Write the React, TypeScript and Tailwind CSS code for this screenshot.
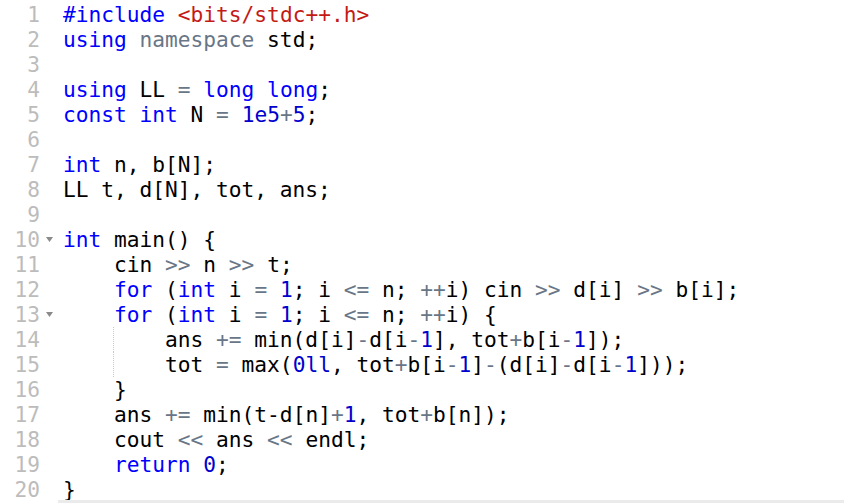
import type { ReactNode } from 'react';

type Tok = [string, string?];

const K = 'text-[#0000ff]';
const S = 'text-[#c41a16]';
const O = 'text-[#687687]';
const N = 'text-[#0000cd]';

const lines: Tok[][] = [
    [['#include', K], [' '], ['<bits/stdc++.h>', S]],
    [['using', K], [' '], ['namespace', O], [' std;']],
    [],
    [['using', K], [' LL '], ['=', O], [' '], ['long long', K], [';']],
    [['const', K], [' '], ['int', K], [' N '], ['=', O], [' '], ['1e5', N], ['+', O], ['5', N], [';']],
    [],
    [['int', K], [' n, b[N];']],
    [['LL t, d[N], tot, ans;']],
    [],
    [['int', K], [' main() {']],
    [['    cin '], ['>>', O], [' n '], ['>>', O], [' t;']],
    [
        ['    '], ['for', K], [' ('], ['int', K], [' i '], ['=', O], [' '], ['1', N], ['; i '], ['<=', O],
        [' n; '], ['++', O], ['i) cin '], ['>>', O], [' d[i] '], ['>>', O], [' b[i];'],
    ],
    [
        ['    '], ['for', K], [' ('], ['int', K], [' i '], ['=', O], [' '], ['1', N], ['; i '], ['<=', O],
        [' n; '], ['++', O], ['i) {'],
    ],
    [
        ['        ans '], ['+=', O], [' min(d[i]'], ['-', O], ['d[i'], ['-', O], ['1', N], ['], tot'],
        ['+', O], ['b[i'], ['-', O], ['1', N], [']);'],
    ],
    [
        ['        tot '], ['=', O], [' max('], ['0ll', N], [', tot'], ['+', O], ['b[i'], ['-', O], ['1', N],
        [']'], ['-', O], ['(d[i]'], ['-', O], ['d[i'], ['-', O], ['1', N], [']));'],
    ],
    [['    }']],
    [
        ['    ans '], ['+=', O], [' min(t-d[n]'], ['+', O], ['1', N], [', tot'], ['+', O], ['b[n]);'],
    ],
    [['    cout '], ['<<', O], [' ans '], ['<<', O], [' endl;']],
    [['    '], ['return', K], [' '], ['0', N], [';']],
    [['}']],
];

const folds = new Set([10, 13]);

function Line({ toks, n }: { toks: Tok[]; n: number }): ReactNode {
    return (
        <div className="relative h-[25px] leading-[25px] whitespace-pre">
            {(n === 14 || n === 15) && (
                <span className="absolute left-[50px] top-0 h-[25px] border-l border-dotted border-[#c8c8c8]" />
            )}
            {toks.length === 0 ? ' ' : toks.map(([t, c], i) => (
                <span key={i} className={c ?? 'text-black'}>
                    {t}
                </span>
            ))}
        </div>
    );
}

export default function App() {
    return (
        <div
            className="relative h-[503px] w-[844px] overflow-hidden bg-white pt-[2px] text-[21.2px]"
            style={{ fontFamily: '"DejaVu Sans Mono", "Liberation Mono", monospace' }}
        >
            <div className="flex">
                <div className="w-[63px] shrink-0">
                    {lines.map((_, i) => (
                        <div key={i} className="flex h-[25px] items-center leading-[25px]">
                            <span className="w-[40px] text-right text-[#bcbcbc]">{i + 1}</span>
                            <span className="flex w-[23px] justify-center pr-[5px]">
                                {folds.has(i + 1) && (
                                    <svg width="7" height="5" viewBox="0 0 7 5">
                                        <path d="M0 0 H7 L3.5 5 Z" fill="#8a8a8a" />
                                    </svg>
                                )}
                            </span>
                        </div>
                    ))}
                </div>
                <div className="flex-1">
                    {lines.map((toks, i) => (
                        <Line key={i} toks={toks} n={i + 1} />
                    ))}
                </div>
            </div>
            <div className="absolute bottom-0 left-[58px] right-0 h-[3px] bg-[#ebebeb]" />
        </div>
    );
}
